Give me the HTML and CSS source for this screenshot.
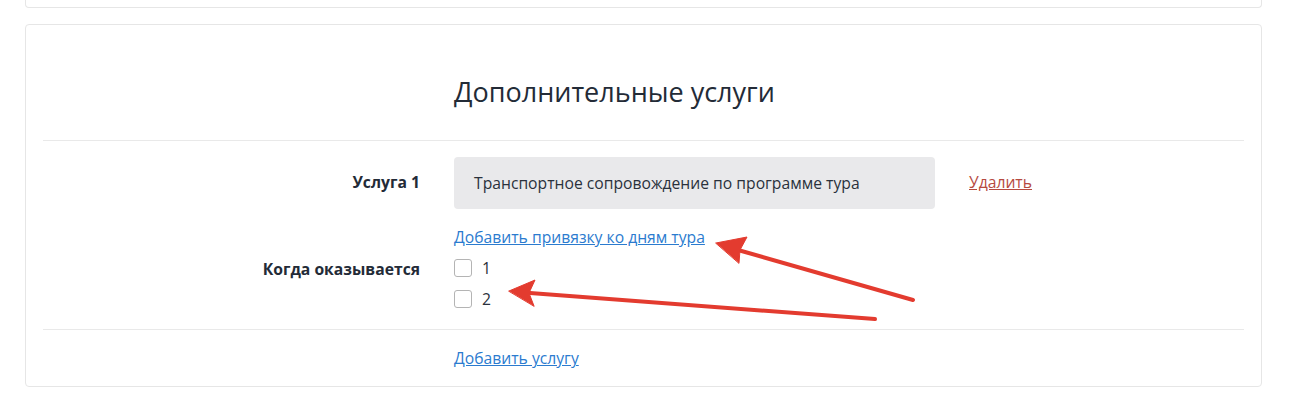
FILE: index.html
```html
<!DOCTYPE html>
<html lang="ru">
<head>
    <meta charset="UTF-8">
    <meta name="viewport" content="width=device-width, initial-scale=1.0">
    <title>Дополнительные услуги</title>
    <link rel="stylesheet" href="styles.css">
</head>
<body>
    <div class="page">
        <div class="card card-prev"></div>

        <div class="card services-card">
            <div class="card-header">
                <h2>Дополнительные услуги</h2>
            </div>

            <div class="form-row service-row">
                <div class="form-label">Услуга 1</div>
                <div class="form-control">
                    <div class="service-field">
                        <div class="service-input">Транспортное сопровождение по программе тура</div>
                        <a href="#" class="link link-danger">Удалить</a>
                    </div>
                    <a href="#" class="link link-primary bind-link">Добавить привязку ко дням тура</a>
                </div>
            </div>

            <div class="form-row days-row">
                <div class="form-label">Когда оказывается</div>
                <div class="form-control">
                    <label class="check"><span class="check-box"></span>1</label>
                    <label class="check"><span class="check-box"></span>2</label>
                </div>
            </div>

            <div class="form-row card-footer">
                <div class="form-label"></div>
                <div class="form-control">
                    <a href="#" class="link link-primary">Добавить услугу</a>
                </div>
            </div>

            <!-- pointer arrows drawn over the form -->
            <svg class="arrows" viewBox="25 24 1237 362" width="1237" height="362">
                <g fill="#e33b2f" stroke="#e33b2f" stroke-linecap="round" stroke-linejoin="round">
                    <line x1="913" y1="300" x2="738" y2="250" stroke-width="4"/>
                    <polygon points="716,243 747,237 740,250 739,263" stroke-width="1"/>
                    <line x1="875" y1="319" x2="530" y2="293" stroke-width="4"/>
                    <polygon points="509,291 535,280 529,293 534,306" stroke-width="1"/>
                </g>
            </svg>
        </div>
    </div>
</body>
</html>
```

FILE: styles.css
```css
body {
    margin: 0;
    padding: 0;
    background-color: #fff;
    font-family: "Open Sans", Arial, sans-serif;
    color: #2a313c;
}

.page {
    width: 1237px;
    margin-left: 25px;
}

.card {
    position: relative;
    background-color: #fff;
    border: 1px solid #e6e6e6;
    border-radius: 4px;
    box-sizing: border-box;
}

.card-prev {
    height: 8px;
    border-top: none;
    border-radius: 0 0 4px 4px;
    margin-bottom: 16px;
}

.services-card {
    padding: 0 17px;
    height: 363px;
}

.card-header {
    padding: 51px 0 32px 411px;
    border-bottom: 1px solid #e9e9e9;
}

.card-header h2 {
    margin: 0;
    font-size: 27px;
    font-weight: 400;
    line-height: 1.2;
    color: #232b37;
}

.form-row {
    display: grid;
    grid-template-columns: 377px 1fr;
    column-gap: 34px;
}

.form-label {
    text-align: right;
    font-size: 15.7px;
    font-weight: 700;
    color: #232b37;
}

.service-row {
    padding-top: 16px;
}

.service-row .form-label {
    line-height: 50px;
}

.service-field {
    display: flex;
    align-items: center;
    gap: 34px;
}

.service-input {
    width: 481px;
    height: 52px;
    padding-left: 20px;
    box-sizing: border-box;
    background-color: #e9e9eb;
    border-radius: 4px;
    font-size: 15.7px;
    line-height: 52px;
    color: #2a313c;
}

.link {
    font-size: 15.7px;
    line-height: 22px;
}

.link-primary {
    color: #2b7bcf;
}

.link-danger {
    color: #b64a3f;
    margin-top: -3px;
}

.bind-link {
    display: inline-block;
    margin-top: 17px;
}

.days-row {
    padding-top: 7px;
    padding-bottom: 18px;
    border-bottom: 1px solid #e9e9e9;
}

.days-row .form-label {
    line-height: 25px;
    padding-top: 2px;
}

.check {
    display: flex;
    align-items: center;
    gap: 10px;
    height: 25px;
    margin-bottom: 6px;
    font-size: 15.7px;
    color: #2a313c;
}

.check:last-child {
    margin-bottom: 0;
}

.check-box {
    width: 18px;
    height: 18px;
    box-sizing: border-box;
    border: 1px solid #b4b4b4;
    border-radius: 3px;
    background-color: #fff;
}

.card-footer {
    padding-top: 17px;
}

.arrows {
    position: absolute;
    left: -1px;
    top: -1px;
    pointer-events: none;
}
```
